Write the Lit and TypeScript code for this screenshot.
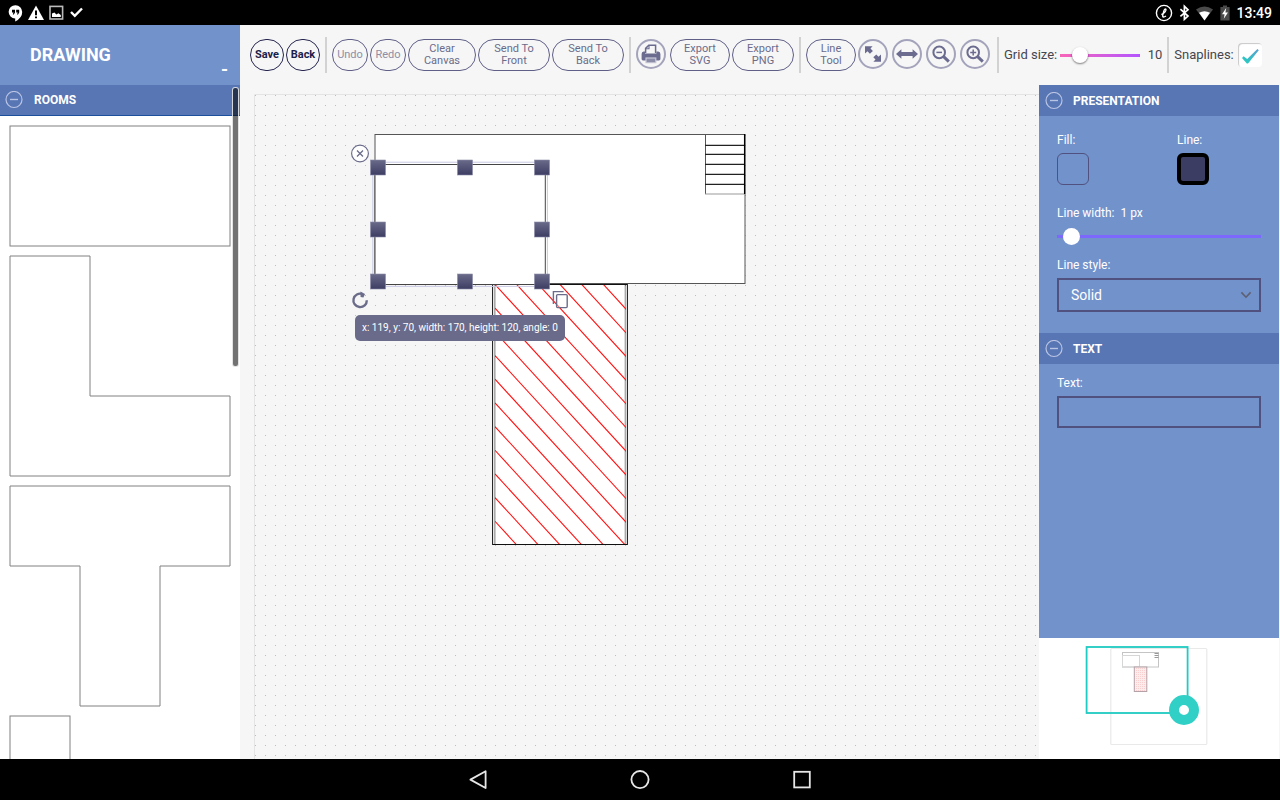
import { LitElement, html, css, svg } from "lit";
import { customElement, state } from "lit/decorators.js";

const HANDLES: Array<[number, number]> = [
  [378, 167], [465, 167], [542, 167],
  [378, 229], [542, 229],
  [378, 281], [465, 281], [542, 281],
];

const HATCH_STEPS = Array.from({ length: 19 }, (_, i) => i - 6);

const STAIRS = [145, 154, 164, 174, 184];

const minusIcon = html`<svg class="toggle" width="18" height="18" viewBox="0 0 18 18" aria-hidden="true">
  <circle cx="9" cy="8.5" r="8" fill="none" stroke="currentColor" stroke-width="1.2" />
  <path d="M5 8.5H13" stroke="currentColor" stroke-width="1.4" />
</svg>`;

const printIcon = html`<svg width="20" height="20" viewBox="0 0 20 20" aria-hidden="true">
  <path d="M4.6 9V4.4L7.8 1.2H14.6V9" fill="none" stroke="currentColor" stroke-width="1.5" />
  <path d="M8 1.4V4.8H4.8" fill="none" stroke="currentColor" stroke-width="1.1" />
  <path d="M2.6 7.6H4V9.6H15.4V7.6H17.2Q19.4 7.8 19.4 10V15Q19.4 16.4 18 16.4H2Q.6 16.4 .6 15V10Q.6 7.8 2.6 7.6Z" fill="currentColor" />
  <path d="M4.4 13.4H15.4V19.2H4.4Z" fill="#c9c9d8" />
  <path d="M5.6 14.6H14.2V18.2H5.6Z" fill="currentColor" opacity=".65" />
</svg>`;

const fitIcon = html`<svg width="20" height="20" viewBox="0 0 20 20" aria-hidden="true">
  <path d="M2 2.2H9.6L7.5 4.5L9.9 6.9L6.9 9.7L4.5 7.3L2 9.6Z" fill="currentColor" />
  <path d="M18 17.8H10.4L12.5 15.5L10.3 13.3L13.3 10.5L15.5 12.7L18 10.4Z" fill="currentColor" />
</svg>`;

const widthIcon = html`<svg width="24" height="20" viewBox="0 0 24 20" aria-hidden="true">
  <path d="M1 10L6.4 5.2V8H17.6V5.2L23 10L17.6 14.8V12H6.4V14.8Z" fill="currentColor" />
</svg>`;

const zoomIcon = (plus: boolean) => html`<svg width="20" height="20" viewBox="0 0 20 20" aria-hidden="true">
  <circle cx="8.2" cy="8.4" r="5.8" fill="none" stroke="currentColor" stroke-width="2" />
  <path d="M12.4 12.4L17.8 17.6" stroke="currentColor" stroke-width="3" />
  <path d=${plus ? "M5.2 8.4H11.2M8.2 5.4V11.4" : "M5.4 8.4H11"} stroke="currentColor" stroke-width="1.5" />
</svg>`;

@customElement("status-bar")
class StatusBar extends LitElement {
  static styles = css`
    :host {
      display: flex;
      justify-content: space-between;
      align-items: center;
      height: 25px;
      padding: 0 8px 0 7px;
      background: #000;
      color: #fff;
      font: 500 14px/24px Roboto, sans-serif;
    }
    .group { display: flex; align-items: center; gap: 4px; }
    svg { display: block; }
  `;
  render() {
    return html`
      <div class="group">
        <svg width="17" height="18" viewBox="0 0 17 18">
          <path d="M8.5 1.2A6.7 6.7 0 1 0 8.2 14.6V17.4Q15.2 14 15.2 8A6.7 6.7 0 0 0 8.5 1.2Z" fill="#fff" />
          <path d="M5 5.8H8V8.6L6.8 10.4H5.8L6.5 8.6H5ZM9.2 5.8H12.2V8.6L11 10.4H10L10.7 8.6H9.2Z" fill="#000" />
        </svg>
        <svg width="16" height="18" viewBox="0 0 16 18">
          <path d="M8 1.4L16 16H0Z" fill="#fff" />
          <path d="M7 6.6H9V11.2H7ZM7 12.4H9V14.2H7Z" fill="#000" />
        </svg>
        <svg width="16" height="18" viewBox="0 0 16 18">
          <rect x="2" y="2.4" width="12.6" height="12.6" fill="none" stroke="#bbb" stroke-width="1.6" />
          <path d="M4 13V9.6L6.4 8.4L8.4 10.6L10.4 9.2L12.8 11V13Z" fill="#fff" />
        </svg>
        <svg width="16" height="18" viewBox="0 0 16 18">
          <path d="M3 8L6.8 11.8L14 4.5" fill="none" stroke="#fff" stroke-width="2.4" />
        </svg>
      </div>
      <div class="group">
        <svg width="20" height="18" viewBox="0 0 20 18">
          <circle cx="11" cy="9" r="7.6" fill="none" stroke="#fff" stroke-width="1.4" />
          <path d="M8.4 10.6Q13.4 8 13 5.2Q11.8 4 10.6 7.6L9.6 12Q10 14 13 12" fill="none" stroke="#fff" stroke-width="1.3" />
        </svg>
        <svg width="14" height="18" viewBox="0 0 14 18">
          <path d="M3.4 5.2L11 12L7.4 15.4V2.2L11 5.8L3.4 12.4" fill="none" stroke="#fff" stroke-width="1.7" />
        </svg>
        <svg width="19" height="18" viewBox="0 0 19 18">
          <path d="M1 5.6Q9.5 -.6 18 5.6L9.5 16.4Z" fill="#4a4a4a" />
          <path d="M4 8.8Q9.5 5.6 15 8.8L9.5 16.4Z" fill="#fff" />
        </svg>
        <svg width="14" height="18" viewBox="0 0 14 18">
          <path d="M2.4 3H5V1.6H9V3H11.6V16.4H2.4Z" fill="#4a4a4a" />
          <path d="M8.2 4L4 10.2H6.6L5.8 14.8L10 8.6H7.4Z" fill="#fff" />
        </svg>
        <time>13:49</time>
      </div>
    `;
  }
}

@customElement("nav-bar")
class NavBar extends LitElement {
  static styles = css`
    :host {
      display: flex;
      justify-content: center;
      align-items: center;
      gap: 138px;
      height: 41px;
      background: #000;
    }
    button { display: block; padding: 0; border: 0; background: none; }
    svg { display: block; fill: none; stroke: #e6e6e6; stroke-width: 1.8; }
  `;
  render() {
    return html`
      <button aria-label="Back"><svg width="24" height="24" viewBox="0 0 24 24"><path d="M19.6 3.2V20L4.4 11.6Z" stroke-linejoin="round" /></svg></button>
      <button aria-label="Home"><svg width="24" height="24" viewBox="0 0 24 24"><circle cx="12" cy="11.6" r="8.6" /></svg></button>
      <button aria-label="Overview"><svg width="24" height="24" viewBox="0 0 24 24"><rect x="4.2" y="3.8" width="15.6" height="15.6" /></svg></button>
    `;
  }
}

@customElement("shape-stencil")
class ShapeStencil extends LitElement {
  static styles = css`
    :host {
      display: flex;
      flex-direction: column;
      position: relative;
      min-height: 0;
      overflow: hidden;
      background: #fff;
      color: #fff;
      font-family: Roboto, sans-serif;
    }
    .head {
      display: flex;
      justify-content: space-between;
      height: 60px;
      padding: 0 12px 0 30px;
      background: #7292cc;
      box-sizing: border-box;
      flex: none;
    }
    h1 { margin: 0; font: 700 18px/60px Roboto, sans-serif; }
    .collapse {
      align-self: flex-end;
      padding: 0;
      border: 0;
      background: none;
      color: #fff;
      font: 700 18px/30px Roboto, sans-serif;
    }
    .group {
      display: flex;
      align-items: center;
      gap: 11px;
      width: 100%;
      height: 31px;
      padding: 0 5px;
      border: 0;
      border-bottom: 1px solid #1c4f9c;
      background: #5776b3;
      color: #fff;
      font: 700 12px/32px Roboto, sans-serif;
      flex: none;
    }
    .toggle { color: #b9c3e4; }
    .shapes { display: block; flex: 1; min-height: 0; width: 100%; fill: #fff; stroke: #808080; }
    .thumb {
      position: absolute;
      top: 62px;
      right: 1px;
      width: 5px;
      height: 278px;
      border: 1px solid rgba(255, 255, 255, 0.8);
      border-radius: 3px;
      background: rgba(0, 0, 0, 0.55);
    }
  `;
  render() {
    return html`
      <div class="head">
        <h1>DRAWING</h1>
        <button class="collapse" aria-label="Collapse">-</button>
      </div>
      <button class="group">${minusIcon}ROOMS</button>
      <svg class="shapes" height="700">
        <rect x="10" y="10" width="220" height="120" />
        <path d="M10 140H90V280H230V360H10Z" />
        <path d="M10 370H230V450H160V590H80V450H10Z" />
        <rect x="10" y="600" width="60" height="60" />
      </svg>
      <div class="thumb"></div>
    `;
  }
}

@customElement("tool-bar")
class ToolBar extends LitElement {
  @state() private grid = 10;

  static styles = css`
    :host {
      display: flex;
      align-items: center;
      gap: 2px;
      height: 60px;
      padding: 0 10px;
      box-sizing: border-box;
      background: #f6f6f6;
      color: #45464e;
      font: 13px/16px Roboto, sans-serif;
    }
    button {
      box-sizing: border-box;
      flex: none;
      padding: 0;
      border: 1px solid #5f5f88;
      border-radius: 16px;
      background: none;
      color: #6a6c8a;
      font: 11px/12px Roboto, sans-serif;
    }
    .pill { height: 32px; }
    .w34 { width: 34px; }
    .w36 { width: 36px; }
    .w50 { width: 50px; }
    .w60 { width: 60px; }
    .w62 { width: 62px; }
    .w68 { width: 68px; }
    .w72 { width: 72px; }
    .strong { border-color: #25254f; color: #1d1d4a; font-weight: 700; }
    .faded { color: #8d8ea6; }
    .round {
      display: grid;
      place-items: center;
      width: 30px;
      height: 30px;
      margin: 0 2px 2px 0;
      border: 2px solid #a3a3bb;
      color: #6a6b8f;
    }
    .sep { flex: none; width: 2px; height: 36px; margin: 0 3px; background: #d2d2d2; }
    .slider {
      appearance: none;
      width: 80px;
      height: 18px;
      margin: 0 0 0 1px;
      background: linear-gradient(90deg, #f765b8, #b455ff) center / 100% 3px no-repeat;
    }
    .slider::-webkit-slider-thumb {
      appearance: none;
      width: 16px;
      height: 16px;
      border-radius: 50%;
      background: #fff;
      box-shadow: 0 1px 2px rgba(0, 0, 0, 0.5);
    }
    output { width: 20px; text-align: right; }
    .check { display: grid; margin-left: 2px; }
    .check > * { grid-area: 1 / 1; margin: 0; }
    .check input {
      appearance: none;
      width: 24px;
      height: 24px;
      border-radius: 4px;
      background: #fff;
      box-shadow: inset 1px 1px 1px #c8c8c8;
    }
    .check svg { pointer-events: none; }
    svg { display: block; }
  `;
  render() {
    return html`
      <button class="pill w34 strong">Save</button>
      <button class="pill w34 strong">Back</button>
      <span class="sep"></span>
      <button class="pill w36 faded">Undo</button>
      <button class="pill w36 faded">Redo</button>
      <button class="pill w68">Clear<br />Canvas</button>
      <button class="pill w72">Send To<br />Front</button>
      <button class="pill w72">Send To<br />Back</button>
      <span class="sep"></span>
      <button class="round" aria-label="Print">${printIcon}</button>
      <button class="pill w60">Export<br />SVG</button>
      <button class="pill w62">Export<br />PNG</button>
      <span class="sep"></span>
      <button class="pill w50">Line<br />Tool</button>
      <button class="round" aria-label="Zoom to fit">${fitIcon}</button>
      <button class="round" aria-label="Fit width">${widthIcon}</button>
      <button class="round" aria-label="Zoom out">${zoomIcon(false)}</button>
      <button class="round" aria-label="Zoom in">${zoomIcon(true)}</button>
      <span class="sep"></span>
      <label for="grid">Grid size:</label>
      <input id="grid" class="slider" type="range" min="1" max="50" .value=${String(this.grid)}
        @input=${(e: Event) => (this.grid = Number((e.target as HTMLInputElement).value))} />
      <output for="grid">${this.grid}</output>
      <span class="sep"></span>
      <label for="snap">Snaplines:</label>
      <span class="check">
        <input id="snap" type="checkbox" checked />
        <svg width="24" height="24" viewBox="0 0 24 24">
          <defs>
            <linearGradient id="tick" x1="0" y1="1" x2="1" y2="0">
              <stop offset="0" stop-color="#22d0c0" />
              <stop offset="1" stop-color="#5a9fd0" />
            </linearGradient>
          </defs>
          <path d="M4 15L5.6 13.2L9.2 16L19.4 6L20.8 7.2L10 20.4H8.8Z" fill="url(#tick)" />
        </svg>
      </span>
    `;
  }
}

@customElement("floor-canvas")
class FloorCanvas extends LitElement {
  static styles = css`
    :host {
      display: block;
      position: relative;
      min-height: 0;
      overflow: hidden;
      background: #f6f6f6;
    }
    .paper { display: block; position: absolute; inset: 0; width: 100%; height: 100%; }
    .tool {
      position: absolute;
      padding: 0;
      border: 0;
      background: none;
      color: #6a6c8a;
    }
    .tool svg { display: block; }
    .remove { left: 110px; top: 59px; }
    .rotate { left: 110px; top: 205px; }
    .clone { left: 311px; top: 205px; }
    .tip {
      position: absolute;
      left: 115px;
      top: 230px;
      padding: 0 7px;
      border-radius: 5px;
      background: #6a6b8a;
      color: #fff;
      font: 10px/26px Roboto, sans-serif;
      white-space: nowrap;
    }
  `;
  render() {
    return html`
      <svg class="paper">
        <defs>
          <pattern id="dots" x="15" y="10" width="10" height="10" patternUnits="userSpaceOnUse">
            <rect width="1" height="1" fill="#bdbdbd" />
          </pattern>
          <linearGradient id="grip" x1="0" y1="0" x2="0" y2="1">
            <stop offset="0" stop-color="#6a6b8a" />
            <stop offset="1" stop-color="#3c3d62" />
          </linearGradient>
          <clipPath id="hall"><rect x="495" y="285" width="131" height="259" /></clipPath>
        </defs>
        <path d="M14.5 2000V9.5H2000" fill="none" stroke="#e4e4e4" />
        <rect x="15" y="10" width="2000" height="2000" fill="url(#dots)" />
        <g transform="translate(-240 -85)">
          <rect x="375" y="134.5" width="370" height="149" fill="#fff" stroke="#555" />
          <g fill="none" stroke="#222">
            <path d="M705.5 134V194" stroke="#555" />
            <path d="M705 194H745" stroke="#999" />
            ${STAIRS.map((y) => svg`<path d="M705 ${y + 0.3}H745" stroke-width="1.3" />`)}
            <path d="M744.6 134V194" stroke="#000" stroke-width="1.3" />
          </g>
          <rect x="492.6" y="284.5" width="134.8" height="260" fill="#fff" stroke="#111" />
          <path d="M494.8 285V544M625.4 285V544" stroke="#aaa" stroke-width="1.6" />
          <g clip-path="url(#hall)" stroke="#f11" stroke-width="1.1">
            ${HATCH_STEPS.map((i) => svg`<path d="M495 ${284.5 + i * 23.68}l300 327.4" />`)}
          </g>
          <rect x="375" y="164.5" width="170.3" height="120" fill="#fff" stroke="#444" />
          <rect x="372.8" y="162.2" width="174.6" height="124.2" fill="none" stroke="#c9c9e4" />
          ${HANDLES.map(([x, y]) => svg`<rect x=${x - 7.5} y=${y - 7} width="15" height="15" fill="url(#grip)" stroke="#8a8aa8" stroke-width=".6" />`)}
        </g>
      </svg>
      <button class="tool remove" aria-label="Remove">
        <svg width="20" height="20" viewBox="0 0 20 20" fill="none" stroke="currentColor">
          <circle cx="10" cy="9.5" r="8.4" fill="#fff" stroke-width="1.2" />
          <path d="M7 6.5L13 12.5M13 6.5L7 12.5" stroke-width="1.3" />
        </svg>
      </button>
      <button class="tool rotate" aria-label="Rotate">
        <svg width="20" height="20" viewBox="0 0 20 20">
          <path d="M12.4 4.1A6.7 6.7 0 1 0 16.8 10.2" fill="none" stroke="currentColor" stroke-width="2.4" />
          <path d="M10.4 1.4L15 4L13.4 7.6L10.6 7Z" fill="currentColor" />
        </svg>
      </button>
      <button class="tool clone" aria-label="Clone">
        <svg width="18" height="20" viewBox="0 0 18 20" fill="none" stroke="currentColor" stroke-width="1.4">
          <path d="M2.4 14V1.6H12.6" />
          <rect x="5.6" y="4.6" width="10.6" height="13" rx="1" fill="#fff" fill-opacity=".4" />
        </svg>
      </button>
      <div class="tip">x: 119, y: 70, width: 170, height: 120, angle: 0</div>
    `;
  }
}

@customElement("property-inspector")
class PropertyInspector extends LitElement {
  @state() private lineWidth = 1;

  static styles = css`
    :host {
      display: block;
      min-height: 0;
      overflow: hidden;
      background: #7292cc;
      color: #fff;
      font: 12px/16px Roboto, sans-serif;
    }
    .group {
      display: flex;
      align-items: center;
      gap: 10px;
      width: 100%;
      height: 31px;
      padding: 0 6px;
      border: 0;
      background: #5776b3;
      color: #fff;
      font: 700 12px/32px Roboto, sans-serif;
    }
    .toggle { color: #b9c3e4; }
    .fields { display: grid; gap: 5px; padding: 16px 18px 21px; }
    .fields.compact { padding-top: 11px; }
    .colors { display: grid; grid-template-columns: 120px 1fr; margin-bottom: 15px; }
    .color { display: grid; gap: 5px; justify-items: start; }
    .swatch {
      width: 32px;
      height: 32px;
      padding: 0;
      border: 1px solid #50517f;
      border-radius: 6px;
      background: none;
    }
    .line { border: 4px solid #000; background: #3c3d62; }
    output { margin-left: 3px; }
    .slider {
      appearance: none;
      width: 100%;
      height: 17px;
      margin: 2px 0 7px;
      background: linear-gradient(#7c68fc, #7c68fc) center / 100% 3px no-repeat;
    }
    .slider::-webkit-slider-thumb {
      appearance: none;
      width: 17px;
      height: 17px;
      border-radius: 50%;
      background: #fff;
    }
    .pick { display: grid; align-items: center; }
    .pick > * { grid-area: 1 / 1; }
    .pick svg { justify-self: end; margin-right: 9px; pointer-events: none; }
    select, .text {
      appearance: none;
      box-sizing: border-box;
      width: 100%;
      height: 34px;
      padding: 0 12px;
      border: 2px solid #50517f;
      border-radius: 0;
      background: none;
      color: #fff;
      font: 14px/20px Roboto, sans-serif;
    }
    .text { height: 32px; }
  `;
  render() {
    return html`
      <button class="group">${minusIcon}PRESENTATION</button>
      <div class="fields">
        <div class="colors">
          <div class="color"><label for="fill">Fill:</label><button id="fill" class="swatch"></button></div>
          <div class="color"><label for="line">Line:</label><button id="line" class="swatch line"></button></div>
        </div>
        <div><label for="lw">Line width:</label> <output for="lw">${this.lineWidth} px</output></div>
        <input id="lw" class="slider" type="range" min="0" max="32" .value=${String(this.lineWidth)}
          @input=${(e: Event) => (this.lineWidth = Number((e.target as HTMLInputElement).value))} />
        <label for="style">Line style:</label>
        <div class="pick">
          <select id="style"><option>Solid</option><option>Dotted</option><option>Dashed</option></select>
          <svg width="12" height="10" viewBox="0 0 12 10"><path d="M1.4 2.4L6 7.2L10.6 2.4" fill="none" stroke="#5c6070" stroke-width="1.6" /></svg>
        </div>
      </div>
      <button class="group">${minusIcon}TEXT</button>
      <div class="fields compact">
        <label for="txt">Text:</label>
        <input id="txt" class="text" type="text" />
      </div>
    `;
  }
}

@customElement("mini-map")
class MiniMap extends LitElement {
  static styles = css`
    :host { display: block; height: 121px; background: #fff; }
    svg { display: block; margin: 0 auto; }
  `;
  render() {
    return html`
      <svg width="240" height="121" viewBox="1039 638 240 121" role="img" aria-label="Navigator">
        <defs>
          <pattern id="pink" width="2" height="2" patternUnits="userSpaceOnUse">
            <rect width="2" height="2" fill="#fdecec" /><rect width="1" height="1" fill="#f9cfcf" />
          </pattern>
        </defs>
        <rect x="1110.8" y="648.5" width="96" height="96" rx="1" fill="#fff" stroke="#e9e9e9" stroke-width="1.2" />
        <g fill="none" stroke="#c4c4c4">
          <rect x="1122.5" y="652.5" width="36" height="14.5" />
          <rect x="1122.5" y="655.5" width="17" height="11.5" stroke="#d6d6d6" />
          <path d="M1154.5 653.5H1158.5M1154.5 655.5H1158.5M1154.5 657.5H1158.5" stroke="#999" />
          <rect x="1134.3" y="667" width="12.5" height="24.5" fill="url(#pink)" stroke="#b5a2a8" />
        </g>
        <rect x="1086.6" y="647" width="101" height="66" fill="none" stroke="#1fcbc2" stroke-width="1.8" />
        <circle cx="1184" cy="710" r="10" fill="#fff" stroke="#31d0c6" stroke-width="10" />
      </svg>
    `;
  }
}

@customElement("app-root")
class AppRoot extends LitElement {
  static styles = css`
    :host { display: flex; flex-direction: column; height: 100vh; overflow: hidden; background: #f6f6f6; }
    .app {
      flex: 1;
      min-height: 0;
      display: grid;
      grid-template-columns: 240px minmax(0, 1fr) 240px 1px;
      grid-template-rows: 60px minmax(0, 1fr) 121px;
    }
    shape-stencil { grid-area: 1 / 1 / 4 / 2; }
    tool-bar { grid-area: 1 / 2 / 2 / 5; }
    floor-canvas { grid-area: 2 / 2 / 4 / 3; }
    property-inspector { grid-area: 2 / 3; }
    mini-map { grid-area: 3 / 3; }
  `;
  render() {
    return html`
      <status-bar></status-bar>
      <main class="app">
        <shape-stencil></shape-stencil>
        <tool-bar></tool-bar>
        <floor-canvas></floor-canvas>
        <property-inspector></property-inspector>
        <mini-map></mini-map>
      </main>
      <nav-bar></nav-bar>
    `;
  }
}
